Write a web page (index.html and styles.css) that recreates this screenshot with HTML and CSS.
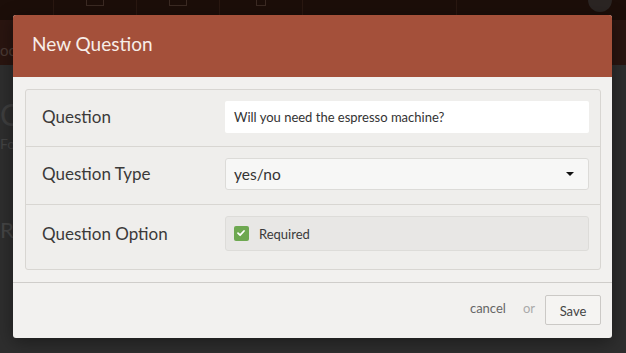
FILE: index.html
```html
<!DOCTYPE html>
<html lang="en">
<head>
  <meta charset="UTF-8">
  <title>New Question</title>
  <link rel="stylesheet" href="styles.css">
</head>
<body>

<div class="page">
  <div class="topnav">
    <div class="nav-item"></div>
    <div class="nav-item"><span class="nav-icon"></span></div>
    <div class="nav-item"><span class="nav-icon"></span></div>
    <div class="nav-item"><span class="nav-icon small"></span></div>
    <div class="nav-item wide"></div>
    <div class="nav-item avatar-cell"><span class="avatar"></span></div>
  </div>
  <div class="page-header">oo</div>
  <div class="page-body">
    <div class="bg-title">C</div>
    <div class="bg-sub">Fo</div>
    <div class="bg-row">Ro</div>
    <div class="bg-foot">available</div>
  </div>
</div>

<div class="overlay">
  <div class="modal">
    <div class="modal-header">New Question</div>
    <div class="modal-body">
      <div class="panel">
        <div class="row">
          <div class="label">Question</div>
          <div class="field">
            <div class="text-input">Will you need the espresso machine?</div>
          </div>
        </div>
        <div class="row">
          <div class="label">Question Type</div>
          <div class="field">
            <div class="select">
              <span>yes/no</span>
              <span class="caret"></span>
            </div>
          </div>
        </div>
        <div class="row last">
          <div class="label">Question Option</div>
          <div class="field">
            <div class="check-box">
              <span class="tick">
                <svg width="14" height="14" viewBox="0 0 14 14">
                  <path d="M4 7.2 L6.1 9.2 L10 5" fill="none" stroke="#fff" stroke-width="1.8" stroke-linecap="round" stroke-linejoin="round"/>
                </svg>
              </span>
              <span>Required</span>
            </div>
          </div>
        </div>
      </div>
    </div>
    <div class="modal-footer">
      <span class="cancel">cancel</span>
      <span class="or">or</span>
      <span class="btn">Save</span>
    </div>
  </div>
</div>

</body>
</html>
```

FILE: styles.css
```css
* {
  box-sizing: border-box;
  margin: 0;
  padding: 0;
}

body {
  font-family: 'Lato', 'Liberation Sans', sans-serif;
  background: #2e2e2e;
  width: 626px;
  height: 353px;
  overflow: hidden;
  position: relative;
}

/* page behind the overlay */

.page {
  height: 353px;
}

.topnav {
  display: flex;
  height: 20px;
  background: #1c0e09;
}

.nav-item {
  width: 83px;
  border-right: 1px solid #2a1811;
  display: flex;
  justify-content: center;
}

.nav-item:first-child {
  width: 54px;
}

.nav-item.wide {
  width: 154px;
}

.nav-item.avatar-cell {
  flex: 1;
  border-right: 0;
  justify-content: flex-end;
  padding-right: 14px;
}

.nav-icon {
  width: 18px;
  height: 6px;
  border: 1px solid #3b2a23;
  border-top: 0;
}

.nav-icon.small {
  width: 10px;
}

.avatar {
  width: 24px;
  height: 12px;
  border-radius: 0 0 12px 12px;
  background: #2b2523;
}

.page-header {
  height: 45px;
  background: #2a1510;
  color: #4a3a34;
  font-size: 15px;
  padding: 21px 0 0 0;
}

.page-body {
  height: 288px;
  color: #444;
}

.bg-title {
  font-size: 30px;
  padding: 34px 0 0 0;
  line-height: 30px;
  color: #3f3f3f;
}

.bg-sub {
  font-size: 14px;
  padding-top: 6px;
  color: #444;
}

.bg-row {
  font-size: 22px;
  padding-top: 64px;
  color: #454545;
}

.bg-foot {
  font-size: 13px;
  padding: 78px 0 0 133px;
  color: #1c1c1c;
}

/* modal */

.overlay {
  position: absolute;
  left: 13px;
  top: 15px;
}

.modal {
  width: 599px;
  height: 323px;
  background: #f2f1ef;
  border-radius: 3px;
  overflow: hidden;
  box-shadow: 0 4px 18px rgba(0, 0, 0, 0.4);
}

.modal-header {
  height: 62px;
  background: #a4503a;
  color: #f7ede8;
  font-size: 19px;
  padding: 17px 0 0 19px;
}

.modal-body {
  padding: 12px 11px 12px 12px;
}

.panel {
  background: #efeeec;
  border: 1px solid #d8d6d2;
  border-radius: 3px;
}

.row {
  display: flex;
  align-items: flex-start;
  height: 58px;
  padding-top: 11px;
  border-bottom: 1px solid #d8d6d2;
}

.row:first-child {
  height: 57px;
}

.row.last {
  height: 64px;
  border-bottom: 0;
}

.label {
  width: 199px;
  padding-left: 16px;
  font-size: 17px;
  line-height: 32px;
  color: #3b3a39;
}

.row.last .label {
  line-height: 35px;
}

.field {
  width: 364px;
}

.text-input {
  height: 32px;
  background: #fff;
  border-radius: 2px;
  padding: 0 0 0 9px;
  line-height: 32px;
  font-size: 13px;
  color: #333;
}

.select {
  height: 32px;
  background: #f7f7f6;
  border: 1px solid #dcdbd8;
  border-radius: 3px;
  display: flex;
  align-items: center;
  justify-content: space-between;
  padding: 0 14px 0 8px;
  font-size: 15.5px;
  color: #333;
}

.caret {
  width: 0;
  height: 0;
  border-left: 4px solid transparent;
  border-right: 4px solid transparent;
  border-top: 4px solid #111;
}

.check-box {
  height: 35px;
  background: #e8e7e5;
  border: 1px solid #dddcd9;
  border-radius: 3px;
  display: flex;
  align-items: center;
  gap: 10px;
  padding-left: 8px;
  font-size: 13px;
  color: #3a3a3a;
}

.tick {
  width: 15px;
  height: 15px;
  background: #6ea851;
  border-radius: 2px;
  display: flex;
}

.modal-footer {
  border-top: 1px solid #cfcdca;
  display: flex;
  align-items: center;
  justify-content: flex-end;
  padding: 13px 11px 0 0;
  font-size: 13px;
}

.cancel {
  color: #666;
  margin-right: 17px;
  margin-top: -5px;
}

.or {
  color: #aaa;
  margin-right: 10px;
  margin-top: -5px;
}

.btn {
  width: 56px;
  height: 30px;
  margin-top: -1px;
  border: 1px solid #cbc9c6;
  border-radius: 2px;
  background: #f5f4f2;
  color: #444;
  text-align: center;
  line-height: 30px;
}
```
